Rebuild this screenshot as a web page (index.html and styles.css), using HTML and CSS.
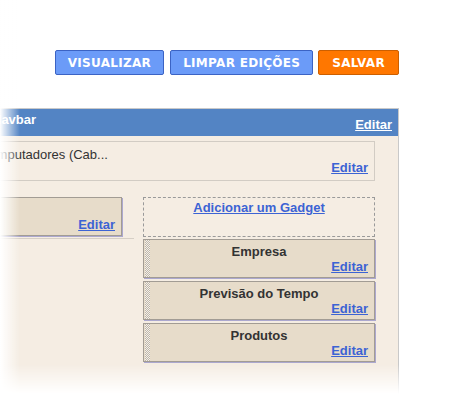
FILE: index.html
```html
<!DOCTYPE html>
<html lang="pt-BR">
<head>
  <meta charset="UTF-8">
  <meta name="viewport" content="width=device-width, initial-scale=1">
  <title>Layout - Elementos da página</title>
  <link rel="stylesheet" href="styles.css">
</head>
<body>
  <div class="toolbar">
    <button class="btn btn-blue">VISUALIZAR</button>
    <button class="btn btn-blue">LIMPAR EDIÇÕES</button>
    <button class="btn btn-orange">SALVAR</button>
  </div>

  <div class="layout">
    <div class="navbar-head">
      <span class="head-title">Navbar</span>
      <a class="edit edit-light" href="#">Editar</a>
    </div>

    <div class="section">
      <div class="section-title">Computadores (Cab...</div>
      <div class="edit-row"><a class="edit" href="#">Editar</a></div>
    </div>

    <div class="columns">
      <div class="main-col">
        <div class="widget widget-main">
          <div class="widget-title">&nbsp;</div>
          <div class="edit-row"><a class="edit" href="#">Editar</a></div>
        </div>
      </div>

      <div class="sidebar">
        <div class="add-gadget"><a href="#">Adicionar um Gadget</a></div>
        <div class="widget">
          <div class="widget-title">Empresa</div>
          <div class="edit-row"><a class="edit" href="#">Editar</a></div>
        </div>
        <div class="widget">
          <div class="widget-title">Previsão do Tempo</div>
          <div class="edit-row"><a class="edit" href="#">Editar</a></div>
        </div>
        <div class="widget">
          <div class="widget-title">Produtos</div>
          <div class="edit-row"><a class="edit" href="#">Editar</a></div>
        </div>
      </div>
    </div>
  </div>

  <!-- esmaecimento nas bordas do recorte -->
  <div class="fade-left"></div>
  <div class="fade-bottom"></div>
</body>
</html>
```

FILE: styles.css
```css
body {
  margin: 0;
  padding: 0;
  background: #fff;
  font-family: 'Liberation Sans', Arial, sans-serif;
  font-size: 13px;
  overflow: hidden;
}

.toolbar {
  display: flex;
  justify-content: flex-end;
  gap: 5px;
  padding: 50px 51px 0 0;
}

.btn {
  height: 25px;
  padding: 0 12px;
  margin: 0;
  font-family: 'DejaVu Sans', Verdana, sans-serif;
  font-size: 12px;
  font-weight: bold;
  letter-spacing: 0.3px;
  color: #fff;
  border-radius: 2px;
  cursor: pointer;
}

.btn-blue {
  background: #6b9bf8;
  border: 1px solid #3b63c4;
}

.btn-blue + .btn-blue {
  margin-left: 1px;
}

.btn-orange {
  padding: 0 13px;
  background: #ff7700;
  border: 1px solid #cc5f00;
}

.layout {
  box-sizing: border-box;
  width: 439px;
  margin: 33px 0 0 -40px;
  padding-bottom: 60px;
  background: #f5ede3;
  border: 1px solid #c9c9c9;
}

.navbar-head {
  box-sizing: border-box;
  height: 27px;
  display: flex;
  justify-content: space-between;
  padding: 3px 6px 4px 31px;
  background: #5384c4;
  line-height: 15px;
}

.head-title {
  align-self: flex-start;
  color: #fff;
  font-weight: bold;
}

.edit {
  color: #3c63d4;
  font-weight: bold;
  text-decoration: underline;
  line-height: 15px;
}

.edit-light {
  align-self: flex-end;
  color: #fff;
}

.section {
  margin: 5px 23px 0 12px;
  padding: 5px 6px 5px 6px;
  border: 1px solid #d2ccc4;
  line-height: 15px;
}

.section-title {
  color: #333;
}

.edit-row {
  text-align: right;
  line-height: 15px;
}

.section .edit-row {
  margin-top: -2px;
}

.columns {
  display: flex;
  gap: 9px;
  margin: 16px 23px 0 12px;
}

.main-col {
  box-sizing: border-box;
  width: 161px;
  padding: 0 12px 2px 0;
  border-bottom: 1px solid #d6cfc6;
  align-self: flex-start;
}

.sidebar {
  flex: 1;
}

.add-gadget {
  box-sizing: border-box;
  height: 40px;
  margin-bottom: 2px;
  padding-top: 2px;
  border: 1px dashed #9a9a9a;
  text-align: center;
  line-height: 15px;
}

.add-gadget a {
  color: #3c63d4;
  font-weight: bold;
  text-decoration: underline;
}

.widget {
  position: relative;
  margin-bottom: 3px;
  padding: 4px 6px 3px 12px;
  background: #e7dcca;
  border: 1px solid #a29c94;
  box-shadow: 1px 1px 0 #aca8cf;
}

.widget::before {
  content: '';
  position: absolute;
  left: 1px;
  top: 0;
  bottom: 0;
  width: 5px;
  background: repeating-conic-gradient(#f3efe9 0 25%, #beb6aa 0 50%) 0 0 / 2px 2px;
}

.widget-main::before {
  display: none;
}

.widget-main {
  margin-bottom: 0;
}

.widget-title {
  color: #333;
  font-weight: bold;
  text-align: center;
  line-height: 15px;
  margin-left: -6px;
}

.fade-left {
  position: fixed;
  left: 0;
  top: 0;
  bottom: 0;
  width: 20px;
  background: linear-gradient(to right, #fff, rgba(255, 255, 255, 0));
}

.fade-bottom {
  position: fixed;
  left: 0;
  right: 0;
  bottom: 0;
  height: 30px;
  background: linear-gradient(to bottom, rgba(255, 255, 255, 0), #fff);
}
```
